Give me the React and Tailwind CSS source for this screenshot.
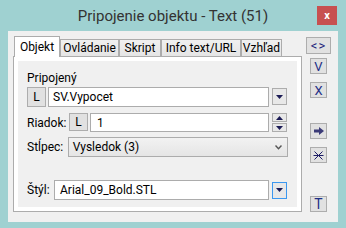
import React from "react";

const tabs = [
  { label: "Objekt", w: "w-[46px]", active: true },
  { label: "Ovládanie", w: "w-[59px]" },
  { label: "Skript", w: "w-[42px]" },
  { label: "Info text/URL", w: "w-[80px]" },
  { label: "Vzhľad", w: "w-[41px]" },
];

function DownTriangle() {
  return (
    <svg width="7" height="4" viewBox="0 0 7 4">
      <path d="M0 0h7L3.5 4z" fill="#1b1b55" />
    </svg>
  );
}

function UpTriangle() {
  return (
    <svg width="7" height="4" viewBox="0 0 7 4">
      <path d="M0 4h7L3.5 0z" fill="#1b1b55" />
    </svg>
  );
}

function LButton({ className = "" }) {
  return (
    <div
      className={`flex items-center justify-center border border-[#adadad] bg-[#e1e1e1] text-[12px] text-black ${className}`}
    >
      L
    </div>
  );
}

function DropButton({ focused }) {
  return (
    <div
      className={`ml-[3px] flex h-[17px] w-[15px] items-center justify-center border bg-[#e8e8e8] ${
        focused ? "border-[#3c98f0]" : "border-[#adadad]"
      }`}
    >
      <DownTriangle />
    </div>
  );
}

function SideButton({ children, className = "" }) {
  return (
    <div
      className={`flex h-[16px] w-[17px] items-center justify-center border border-[#adadad] bg-[#e1e1e1] text-[12px] leading-none text-[#1d2f86] ${className}`}
    >
      {children}
    </div>
  );
}

export default function App() {
  return (
    <div className="flex h-[228px] w-[346px] flex-col bg-[#9fd1d1] font-['Segoe_UI',Roboto,sans-serif] text-[12px] text-black">
      {/* title bar */}
      <div className="grid h-[31px] grid-cols-[1fr_auto_1fr]">
        <div />
        <div className="pt-[6px] text-[15px] leading-[20px] text-[#333333]">
          Pripojenie objektu - Text (51)
        </div>
        <div className="flex justify-end pr-[9px] pt-[6px]">
          <div className="flex h-[19px] w-[20px] items-center justify-center bg-[#c75050] text-[11px] font-bold leading-none text-white">
            x
          </div>
        </div>
      </div>

      {/* client area */}
      <div className="mx-[8px] flex h-[191px] bg-[#f0f0f0]">
        <div className="flex flex-col pl-[5px] pt-[5px]">
          <div className="relative z-10 -mb-[1px] flex items-end pl-[1px]">
            {tabs.map((t) =>
              t.active ? (
                <div
                  key={t.label}
                  className={`${t.w} h-[21px] border border-b-0 border-[#acacac] bg-white pt-[2px] text-center leading-[16px]`}
                >
                  {t.label}
                </div>
              ) : (
                <div
                  key={t.label}
                  className={`${t.w} mb-[1px] h-[17px] border border-b-0 border-[#acacac] bg-gradient-to-b from-[#f0f0f0] to-[#e5e5e5] text-center leading-[16px]`}
                >
                  {t.label}
                </div>
              )
            )}
          </div>

          <div className="h-[156px] w-[289px] border border-[#acacac] bg-white p-[4px]">
            <div className="flex h-full flex-col bg-[#f0f0f0] px-[9px] pt-[9px]">
              <div className="h-[16px] leading-[16px]">Pripojený</div>

              <div className="mt-[1px] flex items-start">
                <LButton className="h-[20px] w-[19px]" />
                <div className="ml-[2px] flex h-[20px] w-[221px] items-center border border-[#acacac] bg-white px-[4px]">
                  SV.Vypocet
                </div>
                <div className="mt-[1px]">
                  <DropButton />
                </div>
              </div>

              <div className="mt-[6px] flex items-start">
                <div className="flex h-[19px] w-[42px] items-center">Riadok:</div>
                <LButton className="h-[18px] w-[19px]" />
                <div className="ml-[2px] flex h-[19px] w-[179px] items-center border border-[#acacac] bg-white px-[6px]">
                  1
                </div>
                <div className="ml-[3px] flex flex-col gap-[1px]">
                  <div className="flex h-[9px] w-[15px] items-center justify-center border border-[#adadad] bg-[#e8e8e8]">
                    <UpTriangle />
                  </div>
                  <div className="flex h-[9px] w-[15px] items-center justify-center border border-[#adadad] bg-[#e8e8e8]">
                    <DownTriangle />
                  </div>
                </div>
              </div>

              <div className="mt-[5px] flex items-center">
                <div className="w-[41px]">Stĺpec:</div>
                <div className="flex h-[20px] w-[222px] items-center justify-between border border-[#acacac] bg-gradient-to-b from-[#f2f2f2] to-[#e5e5e5] pl-[4px] pr-[5px]">
                  <span>Vysledok (3)</span>
                  <svg width="7" height="5" viewBox="0 0 7 5">
                    <path d="M0.5 0.5L3.5 3.8L6.5 0.5" fill="none" stroke="#555555" strokeWidth="1.4" />
                  </svg>
                </div>
              </div>

              <div className="mt-[23px] flex items-center">
                <div className="w-[27px]">Štýl:</div>
                <div className="flex h-[20px] w-[215px] items-center border border-[#acacac] bg-white px-[5px]">
                  Arial_09_Bold.STL
                </div>
                <DropButton focused />
              </div>
            </div>
          </div>
        </div>

        {/* right buttons */}
        <div className="ml-[4px] flex w-[25px] flex-col items-center pt-[6px]">
          <div className="flex h-[17px] w-[25px] items-center justify-center border border-[#adadad] bg-[#e1e1e1] text-[13px] leading-none tracking-[1px] text-[#1d1d7a]">
            &lt;&gt;
          </div>
          <SideButton className="mt-[4px] text-[13px]">V</SideButton>
          <SideButton className="mt-[8px] text-[13px]">X</SideButton>
          <SideButton className="mt-[25px]">
            <svg width="10" height="8" viewBox="0 0 10 8">
              <path d="M0 2.5h5V0l5 4-5 4V5.5H0z" fill="#3b3b78" />
            </svg>
          </SideButton>
          <SideButton className="mt-[8px]">
            <svg width="11" height="11" viewBox="0 0 11 11">
              <path
                d="M1.5 1.5L5.5 5.5L9.5 1.5M1.5 9.5L5.5 5.5L9.5 9.5M0.5 5.5H10.5"
                fill="none"
                stroke="#1b1b66"
                strokeWidth="1"
              />
            </svg>
          </SideButton>
          <SideButton className="mt-[33px] text-[14px] text-[#1d1d55]">T</SideButton>
        </div>
      </div>
    </div>
  );
}
